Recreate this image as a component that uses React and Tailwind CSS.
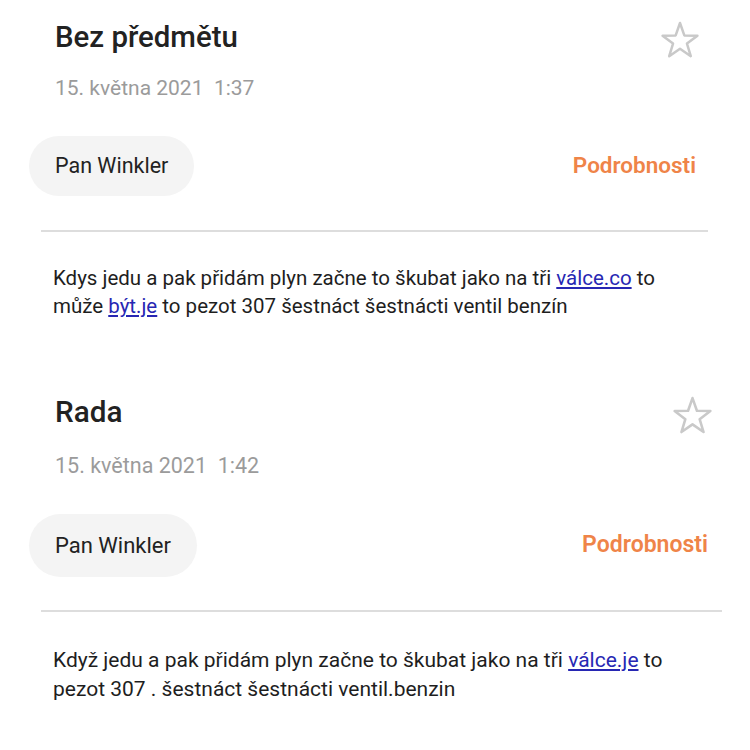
import React from "react";

function Star({ className }) {
  return (
    <svg viewBox="0 0 24 24" className={className} fill="none">
      <polygon
        points="12,1.8 14.59,9.24 22.46,9.4 16.18,14.16 18.47,21.7 12,17.2 5.53,21.7 7.82,14.16 1.54,9.4 9.41,9.24"
        stroke="#c9c9c9"
        strokeWidth="1.5"
        strokeLinejoin="round"
      />
    </svg>
  );
}

function Link({ children }) {
  return <span className="text-[#2727b3] underline underline-offset-2">{children}</span>;
}

export default function App() {
  return (
    <div
      className="w-[750px] h-[750px] bg-white overflow-hidden"
      style={{ fontFamily: "Roboto, 'Noto Sans', sans-serif" }}
    >
      {/* Card 1 */}
      <div className="flex flex-col">
        <div className="flex items-start justify-between pl-[55px] pr-[50px] pt-[19px]">
          <div className="text-[29.4px] leading-[36px] font-medium text-[#222]">Bez předmětu</div>
          <Star className="w-[40px] h-[40px] mt-[1px]" />
        </div>
        <div className="pl-[55px] mt-[14px] text-[21px] leading-[28px] text-[#9b9b9b]">
          15. května 2021&nbsp;&nbsp;1:37
        </div>
        <div className="flex items-center justify-between pl-[29px] pr-[54px] mt-[34px]">
          <div className="h-[60px] rounded-full bg-[#f4f4f4] px-[26px] flex items-center text-[21.5px] text-[#222]">
            Pan Winkler
          </div>
          <div className="text-[22.5px] font-semibold text-[#ef8448]">Podrobnosti</div>
        </div>
        <div className="ml-[41px] mr-[42px] mt-[34px] h-[2px] bg-[#dddddd]" />
        <div className="pl-[53px] mt-[32px] text-[20.5px] leading-[28px] text-[#1e1e1e]">
          Kdys jedu a pak přidám plyn začne to škubat jako na tři <Link>válce.co</Link> to
          <br />
          může <Link>být.je</Link> to pezot 307 šestnáct šestnácti ventil benzín
        </div>
      </div>

      {/* Card 2 */}
      <div className="flex flex-col mt-[74px]">
        <div className="flex items-start justify-between pl-[55px] pr-[37px]">
          <div className="text-[29.7px] leading-[36px] font-medium text-[#222]">Rada</div>
          <div className="mt-[1px]">
            <Star className="w-[41px] h-[41px]" />
          </div>
        </div>
        <div className="pl-[55px] mt-[16px] text-[21.5px] leading-[28px] text-[#9b9b9b]">
          15. května 2021&nbsp;&nbsp;1:42
        </div>
        <div className="flex items-center justify-between pl-[29px] pr-[42px] mt-[34px]">
          <div className="h-[63px] rounded-full bg-[#f4f4f4] px-[26px] flex items-center text-[22px] text-[#222]">
            Pan Winkler
          </div>
          <div className="text-[23px] font-semibold text-[#ef8448]">Podrobnosti</div>
        </div>
        <div className="ml-[41px] mr-[28px] mt-[33px] h-[2px] bg-[#dddddd]" />
        <div className="pl-[53px] mt-[34px] text-[21px] leading-[29px] text-[#1e1e1e]">
          Když jedu a pak přidám plyn začne to škubat jako na tři <Link>válce.je</Link> to
          <br />
          pezot 307 . šestnáct šestnácti ventil.benzin
        </div>
      </div>
    </div>
  );
}
